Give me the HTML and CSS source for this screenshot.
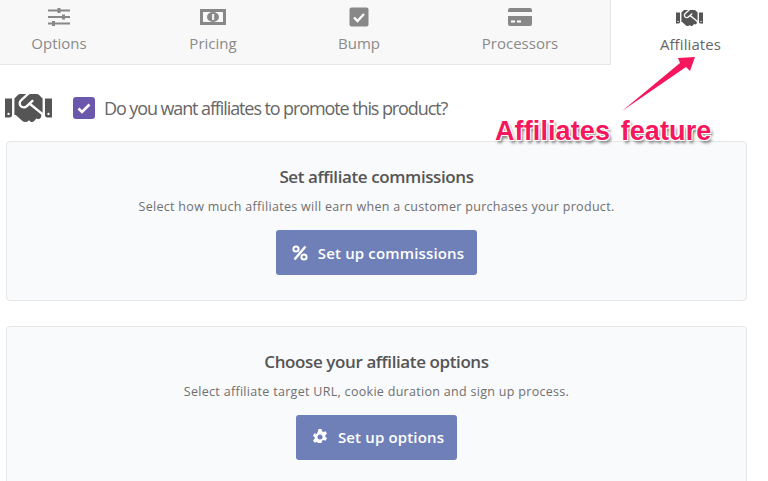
FILE: index.html
```html
<!DOCTYPE html>
<html>
<head>
    <title>Affiliates feature</title>
    <link rel="stylesheet" href="styles.css">
</head>
<body>
<div class="page">
    <div class="tabs">
        <div class="tab">
            <svg class="tab-icon" viewBox="0 0 24 20" width="24" height="20">
                <path d="M1 3.500h22M1 10h22M1 16.500h22" stroke="#888" stroke-width="2.200"/>
                <path d="M10.500 1h3v5h-3zM15 7.500h3v5h-3zM5 14h3v5H5z" fill="#888"/>
            </svg>
            <span>Options</span>
        </div>
        <div class="tab">
            <svg class="tab-icon" viewBox="0 0 28 20" width="28" height="20">
                <path fill-rule="evenodd" fill="#888" d="M1 2h26v16H1zM4 5v10h20V5z"/>
                <ellipse cx="14" cy="10" rx="6" ry="5" fill="#888"/>
                <rect x="13" y="7" width="2.200" height="6" fill="#f0f0f0"/>
            </svg>
            <span>Pricing</span>
        </div>
        <div class="tab">
            <svg class="tab-icon" viewBox="0 0 20 20" width="20" height="20">
                <rect x="0.500" y="0.500" width="19" height="19" rx="2" fill="#888"/>
                <path d="M5 10.500l3.500 3.500L15 7" stroke="#fff" stroke-width="2.400" fill="none"/>
            </svg>
            <span>Bump</span>
        </div>
        <div class="tab tab-processors">
            <svg class="tab-icon" viewBox="0 0 24 20" width="24" height="20">
                <path fill="#888" d="M2 1h20a2 2 0 0 1 2 2v2H0V3a2 2 0 0 1 2-2zM0 9h24v8a2 2 0 0 1-2 2H2a2 2 0 0 1-2-2z"/>
                <path fill="#fff" d="M3 13.500h4v2H3zM9 13.500h4v2H9z"/>
            </svg>
            <span>Processors</span>
        </div>
        <div class="tab tab-affiliates">
            <svg class="tab-icon" viewBox="0 0 640 512" width="27" height="22">
                <use href="#handshake"/>
            </svg>
            <span>Affiliates</span>
        </div>
    </div>

    <div class="question">
        <svg class="question-icon" viewBox="0 0 640 512" width="47" height="38">
            <path id="handshake" fill="#555" d="M434.700 64h-85.900c-8 0-15.700 3-21.600 8.400l-98.300 90c-.1.1-.2.3-.3.4-16.600 15.600-16.300 40.500-2.100 56 12.700 13.900 39.400 17.600 56.100 2.700.1-.1.3-.1.4-.2l79.900-73.200c6.500-5.900 16.700-5.500 22.600 1 6 6.500 5.500 16.600-1 22.600l-26.100 23.900L504 313.800c2.900 2.400 5.500 5 7.900 7.700V128l-54.600-54.600c-5.900-6-14.100-9.400-22.600-9.400zM544 128.200v223.900c0 17.700 14.300 32 32 32h64V128.200h-96zm48 223.900c-8.800 0-16-7.200-16-16s7.200-16 16-16 16 7.200 16 16-7.200 16-16 16zM0 384h64c17.700 0 32-14.300 32-32V128.200H0V384zm48-63.900c8.800 0 16 7.200 16 16s-7.200 16-16 16-16-7.200-16-16c0-8.900 7.200-16 16-16zm435.900 18.600L334.600 217.500l-30 27.500c-29.700 27.100-75.200 24.500-101.700-4.400-26.900-29.400-24.800-74.900 4.400-101.700L289.100 64h-83.800c-8.500 0-16.600 3.400-22.600 9.400L128 128v223.900h18.300l90.500 81.900c27.400 22.300 67.700 18.100 90-9.300l.2-.2 17.900 15.500c15.900 13 39.400 10.500 52.300-5.400l31.400-38.600 5.400 4.400c13.700 11.100 33.900 9.100 45-4.700l9.500-11.700c11.200-13.800 9.100-33.900-4.600-45.100z"/>
        </svg>
        <span class="checkbox">
            <svg viewBox="0 0 14 11" width="14" height="11">
                <path d="M1.500 5.500l3.500 3.500 7.500-7.500" stroke="#fff" stroke-width="2.600" fill="none"/>
            </svg>
        </span>
        <span class="question-text">Do you want affiliates to promote this product?</span>
    </div>

    <div class="card">
        <h3>Set affiliate commissions</h3>
        <p>Select how much affiliates will earn when a customer purchases your product.</p>
        <button>
            <svg viewBox="0 0 16 16" width="16" height="16">
                <path d="M13.500 1.500L2.500 14.500" stroke="#fff" stroke-width="2.400"/>
                <circle cx="4" cy="4" r="2.600" stroke="#fff" stroke-width="2" fill="none"/>
                <circle cx="12" cy="12" r="2.600" stroke="#fff" stroke-width="2" fill="none"/>
            </svg>
            Set up commissions
        </button>
    </div>

    <div class="card">
        <h3>Choose your affiliate options</h3>
        <p>Select affiliate target URL, cookie duration and sign up process.</p>
        <button>
            <svg viewBox="0 0 16 16" width="16" height="16">
                <path fill="#fff" fill-rule="evenodd" d="M6.500 0h3l.5 2.300 1.300.7 2.200-.8 1.500 2.600-1.700 1.500v1.400l1.700 1.500-1.500 2.600-2.200-.8-1.300.7-.5 2.300h-3L6 13.700 4.700 13l-2.200.8L1 11.200l1.700-1.500V8.300L1 6.800l1.500-2.600 2.200.8L6 2.300zM8 5.500a2.500 2.500 0 1 0 0 5a2.500 2.500 0 0 0 0-5z"/>
            </svg>
            Set up options
        </button>
    </div>

    <svg class="arrow" viewBox="0 0 80 60" width="80" height="60">
        <path d="M1 57L59 9 57 4 74 3 69 17 65 13z" fill="#f5165e"/>
    </svg>
    <div class="callout">Affiliates feature</div>
</div>
</body>
</html>
```

FILE: styles.css
```css
body {
    margin: 0;
    font-family: "Open Sans", sans-serif;
    background: #fff;
    color: #555;
}
.page {
    position: relative;
    height: 481px;
    overflow: hidden;
}
.tabs {
    display: grid;
    grid-template-columns: 118px 190px 102px 200px 158px;
    height: 65px;
}
.tab {
    background: #f8f8f8;
    border-bottom: 1px solid #e6e6e6;
    color: #8a8a8a;
    font-size: 15px;
    display: flex;
    flex-direction: column;
    align-items: center;
    padding-top: 7px;
    box-sizing: border-box;
}
.tab span {
    margin-top: 5px;
    line-height: 22px;
}
.tab-icon {
    display: block;
}
.tab-processors {
    padding-left: 20px;
}
.tab-affiliates {
    background: #fff;
    border-bottom: none;
    border-left: 1px solid #e6e6e6;
    color: #666;
}
.tab-affiliates span {
    margin-top: 4px;
    margin-left: 2px;
    letter-spacing: 0.1px;
}
.question {
    display: flex;
    align-items: center;
    height: 32px;
    margin: 27px 0 0 5px;
}
.checkbox {
    width: 22px;
    height: 22px;
    background: #6b57ab;
    border-radius: 3px;
    margin-left: 21px;
    display: flex;
    align-items: center;
    justify-content: center;
}
.question-text {
    font-size: 18px;
    letter-spacing: -1.1px;
    margin-left: 9px;
    color: #666;
}
.card {
    width: 741px;
    height: 160px;
    margin: 0 0 24.500px 6px;
    box-sizing: border-box;
    background: #f9fafc;
    border: 1px solid #e6e6e6;
    border-radius: 4px;
    text-align: center;
    padding-top: 23px;
}
.question + .card {
    margin-top: 17px;
}
.card h3 {
    margin: 0;
    font-size: 17px;
    line-height: 24px;
    font-weight: 600;
    letter-spacing: -0.4px;
    color: #555;
}
.card p {
    margin: 8px 0 0;
    font-size: 12.500px;
    line-height: 20px;
    letter-spacing: 0.3px;
    color: #6f6f6f;
}
.card button {
    margin-top: 13px;
    height: 45px;
    padding: 0 13px 0 16px;
    border: none;
    border-radius: 3px;
    background: #6f7fb8;
    color: #fff;
    font-family: inherit;
    font-size: 15px;
    font-weight: 600;
    letter-spacing: 0.15px;
    display: inline-flex;
    align-items: center;
    gap: 10px;
}
.arrow {
    position: absolute;
    left: 621px;
    top: 54px;
}
.callout {
    position: absolute;
    left: 495px;
    top: 113px;
    font-family: "Liberation Sans", sans-serif;
    font-size: 27px;
    font-weight: bold;
    word-spacing: 3px;
    letter-spacing: 0.1px;
    line-height: 36px;
    color: #f5165e;
    text-shadow: 1px 1px 0 #fff, -1px -1px 0 #fff, 1px -1px 0 #fff, -1px 1px 0 #fff, 2px 3px 3px #777;
    white-space: nowrap;
}
```
